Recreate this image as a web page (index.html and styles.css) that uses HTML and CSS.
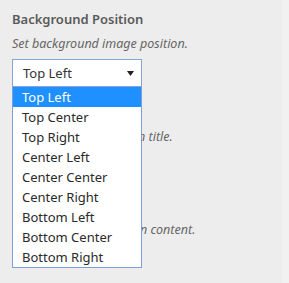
FILE: index.html
```html
<!DOCTYPE html>
<html>
<head lang="en">
    <meta charset="UTF-8">
    <title>Background Position</title>
    <link rel="stylesheet" href="styles.css">
</head>
<body>
<div class="panel">
    <div class="field">
        <div class="field_title">Background Position</div>
        <div class="field_desc">Set background image position.</div>
        <div class="select_wrap">
            <div class="select_box">
                <span>Top Left</span>
                <svg class="arrow" width="7" height="5" viewBox="0 0 7 5"><path d="M0 0H7L3.5 5Z" fill="#222"/></svg>
            </div>
            <ul class="select_list">
                <li class="selected">Top Left</li>
                <li>Top Center</li>
                <li>Top Right</li>
                <li>Center Left</li>
                <li>Center Center</li>
                <li>Center Right</li>
                <li>Bottom Left</li>
                <li>Bottom Center</li>
                <li>Bottom Right</li>
            </ul>
        </div>
    </div>
    <div class="field">
        <div class="field_title">Main Title</div>
        <div class="field_desc">Set the text for the main title.</div>
        <div class="text_input"></div>
    </div>
    <div class="field">
        <div class="field_title">Section Content</div>
        <div class="field_desc">Enter the text for section content.</div>
        <div class="text_input"></div>
    </div>
</div>
</body>
</html>
```

FILE: styles.css
```css
html, body {
    margin: 0;
    padding: 0;
    background: #f1f1f1;
}
.panel {
    width: 282px;
    height: 283px;
    padding: 10px 0 0 12px;
    box-sizing: border-box;
    background: #ededed;
    font-family: "Noto Sans", "Open Sans", sans-serif;
    overflow: hidden;
}
.field {
    height: 93px;
}
.field_title {
    font-size: 13px;
    font-weight: 600;
    color: #5a5a5a;
    line-height: 18px;
}
.field_desc {
    margin-top: 7px;
    font-size: 12.5px;
    font-style: italic;
    color: #666;
    line-height: 17px;
}
.select_wrap {
    position: relative;
    margin-top: 7px;
    width: 130px;
}
.select_box {
    width: 130px;
    height: 28px;
    box-sizing: border-box;
    border: 1px solid #86a4d6;
    background: #fff;
    display: flex;
    align-items: center;
    justify-content: space-between;
    padding: 0 7px 0 10px;
    font-size: 13px;
    color: #333;
}
.text_input {
    width: 110px;
    height: 22px;
    margin-top: 7px;
    box-sizing: border-box;
    border: 1px solid #dcdcdc;
    background: #f4f4f4;
}
.arrow {
    display: block;
}
.select_list {
    position: absolute;
    left: 0;
    top: 28px;
    width: 130px;
    margin: 0;
    padding: 0;
    list-style: none;
    box-sizing: border-box;
    border: 1px solid #7f9ed5;
    border-top: none;
    background: #fff;
}
.select_list li {
    height: 20px;
    line-height: 20px;
    padding-left: 9px;
    font-size: 13px;
    color: #2a2a2a;
}
.select_list li.selected {
    background: #1e90ff;
    color: #fff;
}
```
